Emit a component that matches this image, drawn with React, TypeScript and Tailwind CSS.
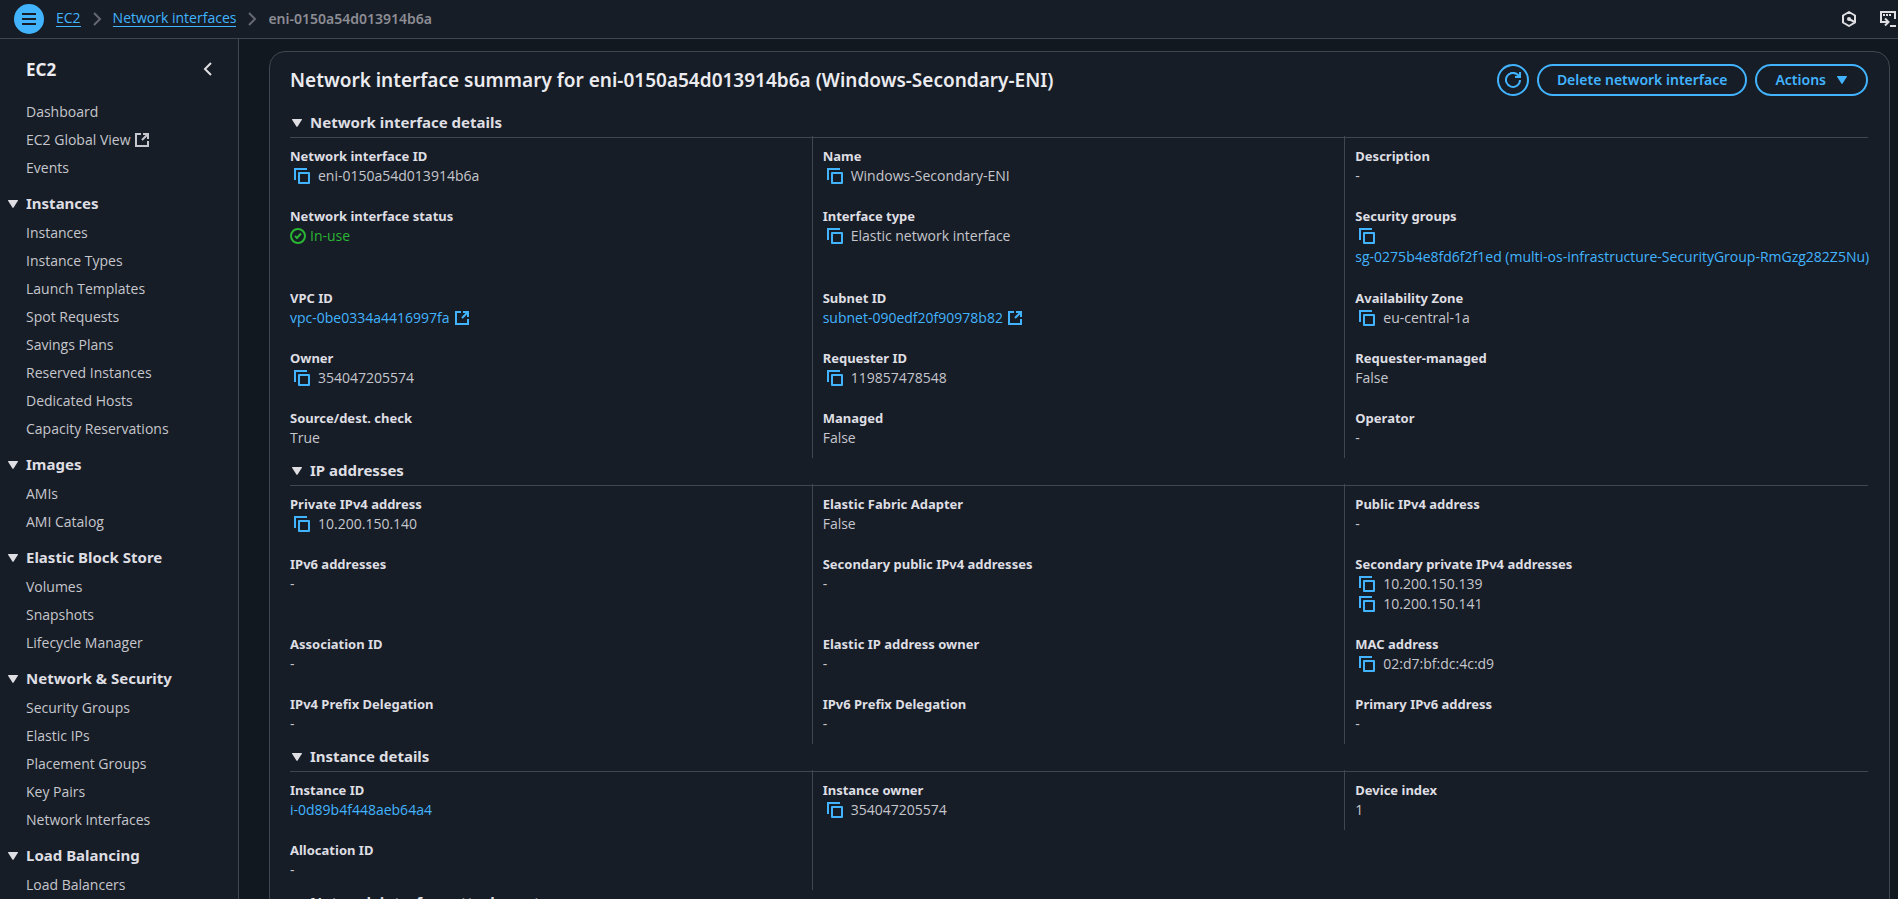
import type { ReactNode } from "react";

type Value =
  | { kind: "text"; text: string }
  | { kind: "copy"; text: string }
  | { kind: "link"; text: string; external?: boolean }
  | { kind: "status"; text: string }
  | { kind: "copyLink"; text: string };

type Field = { label: string; values: Value[] };

const text = (t: string): Value => ({ kind: "text", text: t });
const copy = (t: string): Value => ({ kind: "copy", text: t });
const field = (label: string, ...values: Value[]): Field => ({ label, values });

const navTop = [
  { label: "Dashboard" },
  { label: "EC2 Global View", external: true },
  { label: "Events" },
];

const navGroups = [
  {
    title: "Instances",
    items: [
      "Instances",
      "Instance Types",
      "Launch Templates",
      "Spot Requests",
      "Savings Plans",
      "Reserved Instances",
      "Dedicated Hosts",
      "Capacity Reservations",
    ],
  },
  { title: "Images", items: ["AMIs", "AMI Catalog"] },
  { title: "Elastic Block Store", items: ["Volumes", "Snapshots", "Lifecycle Manager"] },
  {
    title: "Network & Security",
    items: ["Security Groups", "Elastic IPs", "Placement Groups", "Key Pairs", "Network Interfaces"],
  },
  { title: "Load Balancing", items: ["Load Balancers"] },
];

const sections: { title: string; fields: Field[] }[] = [
  {
    title: "Network interface details",
    fields: [
      field("Network interface ID", copy("eni-0150a54d013914b6a")),
      field("Name", copy("Windows-Secondary-ENI")),
      field("Description", text("-")),
      field("Network interface status", { kind: "status", text: "In-use" }),
      field("Interface type", copy("Elastic network interface")),
      field("Security groups", {
        kind: "copyLink",
        text: "sg-0275b4e8fd6f2f1ed (multi-os-infrastructure-SecurityGroup-RmGzg282Z5Nu)",
      }),
      field("VPC ID", { kind: "link", text: "vpc-0be0334a4416997fa", external: true }),
      field("Subnet ID", { kind: "link", text: "subnet-090edf20f90978b82", external: true }),
      field("Availability Zone", copy("eu-central-1a")),
      field("Owner", copy("354047205574")),
      field("Requester ID", copy("119857478548")),
      field("Requester-managed", text("False")),
      field("Source/dest. check", text("True")),
      field("Managed", text("False")),
      field("Operator", text("-")),
    ],
  },
  {
    title: "IP addresses",
    fields: [
      field("Private IPv4 address", copy("10.200.150.140")),
      field("Elastic Fabric Adapter", text("False")),
      field("Public IPv4 address", text("-")),
      field("IPv6 addresses", text("-")),
      field("Secondary public IPv4 addresses", text("-")),
      field("Secondary private IPv4 addresses", copy("10.200.150.139"), copy("10.200.150.141")),
      field("Association ID", text("-")),
      field("Elastic IP address owner", text("-")),
      field("MAC address", copy("02:d7:bf:dc:4c:d9")),
      field("IPv4 Prefix Delegation", text("-")),
      field("IPv6 Prefix Delegation", text("-")),
      field("Primary IPv6 address", text("-")),
    ],
  },
  {
    title: "Instance details",
    fields: [
      field("Instance ID", { kind: "link", text: "i-0d89b4f448aeb64a4" }),
      field("Instance owner", copy("354047205574")),
      field("Device index", text("1")),
      field("Allocation ID", text("-")),
    ],
  },
  { title: "Network interface attachment", fields: [] },
];

function CaretDown() {
  return (
    <svg viewBox="0 0 12 12" className="size-3 shrink-0" fill="currentColor" aria-hidden="true">
      <path d="M1.5 2h9q.9 0 .4.8L6.6 9.6q-.6.8-1.2 0L1.1 2.8Q.6 2 1.5 2z" />
    </svg>
  );
}

function ExternalIcon() {
  return (
    <svg viewBox="0 0 16 16" className="size-4 shrink-0" fill="none" stroke="currentColor" strokeWidth="2" aria-hidden="true">
      <path d="M7 2H2v12h12V9" />
      <path d="M9 2h5v5M14 2 8 8" />
    </svg>
  );
}

function CopyIcon() {
  return (
    <svg viewBox="0 0 16 16" className="size-4 shrink-0" fill="none" stroke="currentColor" strokeWidth="2" aria-hidden="true">
      <path d="M1 12V1h12" />
      <path d="M5 5h10v10H5z" strokeLinejoin="round" />
    </svg>
  );
}

function CopyButton({ label }: { label: string }) {
  return (
    <button type="button" aria-label={`Copy ${label}`} className="mx-1 flex items-center text-[#42b4ff]">
      <CopyIcon />
    </button>
  );
}

function ChevronRight() {
  return (
    <svg viewBox="0 0 16 16" className="size-4 shrink-0 text-[#656871]" fill="none" stroke="currentColor" strokeWidth="2" aria-hidden="true">
      <path d="m5 2 6 6-6 6" />
    </svg>
  );
}

function FieldValue({ value, label }: { value: Value; label: string }) {
  switch (value.kind) {
    case "copy":
      return (
        <div className="flex h-5 items-center gap-1">
          <CopyButton label={label} />
          <span>{value.text}</span>
        </div>
      );
    case "status":
      return (
        <div className="flex h-5 items-center gap-1 text-[#2bb534]">
          <svg viewBox="0 0 16 16" className="size-4 shrink-0" fill="none" stroke="currentColor" strokeWidth="2" aria-hidden="true">
            <circle cx="8" cy="8" r="7" />
            <path d="m5 8 2 2 4-4.5" />
          </svg>
          <span>{value.text}</span>
        </div>
      );
    case "link":
      return (
        <a href="#" className="flex h-5 items-center gap-1 text-[#42b4ff]">
          {value.text}
          {value.external && <ExternalIcon />}
        </a>
      );
    case "copyLink":
      return (
        <div>
          <div className="flex h-5 items-center">
            <CopyButton label={label} />
          </div>
          <a href="#" className="block leading-[22px] whitespace-nowrap text-[#42b4ff]">
            {value.text}
          </a>
        </div>
      );
    default:
      return <div className="h-5">{value.text}</div>;
  }
}

function Section({ title, fields }: { title: string; fields: Field[] }) {
  return (
    <section>
      <h3 className="border-b border-[#424650] pb-[2px] text-[#dedee3]">
        <button
          type="button"
          aria-expanded="true"
          className="flex h-[25px] items-center gap-[7px] pl-px font-['Noto_Sans',sans-serif] text-[15px] font-bold"
        >
          <CaretDown />
          {title}
        </button>
      </h3>
      <dl className="-mx-[10px] -mt-[2px] grid grid-cols-3">
        {fields.map((f) => (
          <div
            key={f.label}
            className="min-w-0 border-r border-[#424650] px-[10px] py-[10px] nth-[3n]:border-r-0"
          >
            <dt className="font-['Noto_Sans',sans-serif] text-[13px] leading-5 font-bold text-[#dedee3]">{f.label}</dt>
            {f.values.map((v) => (
              <dd key={v.text}>
                <FieldValue value={v} label={f.label} />
              </dd>
            ))}
          </div>
        ))}
      </dl>
    </section>
  );
}

function NavLink({ children }: { children: ReactNode }) {
  return (
    <li>
      <a href="#" className="flex h-7 items-center gap-1 pl-[26px]">
        {children}
      </a>
    </li>
  );
}

function TopBar() {
  return (
    <header className="flex h-[39px] shrink-0 items-center justify-between border-b border-[#424650] pr-[2px] pb-px pl-[14px]">
      <div className="flex items-center gap-3">
        <button
          type="button"
          aria-label="Open navigation"
          className="flex size-[30px] items-center justify-center rounded-full bg-[#42b4ff] text-[#161d26]"
        >
          <svg viewBox="0 0 16 16" className="size-4" stroke="currentColor" strokeWidth="2" aria-hidden="true">
            <path d="M1 3h14M1 8h14M1 13h14" />
          </svg>
        </button>
        <nav aria-label="Breadcrumbs">
          <ol className="flex items-center gap-2">
            <li className="flex items-center gap-2">
              <a href="#" className="border-b border-[#42b4ff] leading-4 text-[#42b4ff]">EC2</a>
              <ChevronRight />
            </li>
            <li className="flex items-center gap-2">
              <a href="#" className="border-b border-[#42b4ff] leading-4 text-[#42b4ff]">Network interfaces</a>
              <ChevronRight />
            </li>
            <li className="font-['Noto_Sans',sans-serif] font-semibold text-[#8c8c94]">eni-0150a54d013914b6a</li>
          </ol>
        </nav>
      </div>
      <div className="flex items-center gap-[23px] text-[#dedee3]">
        <button type="button" aria-label="Amazon Q">
          <svg viewBox="0 0 16 16" className="size-4" fill="none" stroke="currentColor" strokeWidth="2" strokeLinejoin="round" aria-hidden="true">
            <path d="m8 1 6 3.5v7L8 15l-6-3.5v-7z" />
            <circle cx="8" cy="8" r="2" fill="currentColor" stroke="none" />
            <path d="m8 8 5.5 3" />
          </svg>
        </button>
        <button type="button" aria-label="CloudShell">
          <svg viewBox="0 0 16 16" className="size-4" fill="none" stroke="currentColor" strokeWidth="2" aria-hidden="true">
            <path d="M15 8V1H1v10h7" />
            <path d="M5 7.5 8.500 11 5 14.500" />
            <path d="M10 15h6" />
            <path d="M3 4h2M6 4h2M9 4h2" />
          </svg>
        </button>
      </div>
    </header>
  );
}

function SideNav() {
  return (
    <aside className="w-[239px] shrink-0 overflow-y-auto border-r border-[#424650] [scrollbar-width:none]">
      <div className="flex h-[59px] items-center justify-between pr-[22px] pl-[26px]">
        <h2 className="pt-[3px] font-['Noto_Sans',sans-serif] text-[17px] font-bold text-[#ebebf0]">EC2</h2>
        <button type="button" aria-label="Close side navigation" className="text-[#dedee3]">
          <svg viewBox="0 0 16 16" className="size-4" fill="none" stroke="currentColor" strokeWidth="2" aria-hidden="true">
            <path d="M11 2 5 8l6 6" />
          </svg>
        </button>
      </div>
      <nav aria-label="EC2">
        <ul>
          {navTop.map((item) => (
            <NavLink key={item.label}>
              {item.label}
              {item.external && <ExternalIcon />}
            </NavLink>
          ))}
        </ul>
        {navGroups.map((group) => (
          <div key={group.title}>
            <h3 className="pt-[7px] text-[#dedee3]">
              <button
                type="button"
                aria-expanded="true"
                className="flex h-[30px] items-center gap-[7px] pl-[7px] font-['Noto_Sans',sans-serif] text-[15px] font-bold"
              >
                <CaretDown />
                {group.title}
              </button>
            </h3>
            <ul>
              {group.items.map((item) => (
                <NavLink key={item}>{item}</NavLink>
              ))}
            </ul>
          </div>
        ))}
      </nav>
    </aside>
  );
}

export default function App() {
  return (
    <div className="flex h-screen flex-col overflow-hidden bg-[#161d26] font-['Open_Sans','Noto_Sans',sans-serif] text-sm text-[#c6c6cd]">
      <TopBar />
      <div className="flex min-h-0 flex-1">
        <SideNav />
        <main className="min-w-0 flex-1 overflow-y-auto bg-[#11181f] pt-3 pr-2 pl-[30px] [scrollbar-width:none]">
          <article className="rounded-2xl border border-[#424650] bg-[#161d26] pr-[21px] pb-5 pl-5">
            <header className="mb-[2px] flex h-14 items-center justify-between">
              <h1 className="pt-[2px] font-['Noto_Sans',sans-serif] text-[19px] font-semibold text-[#ebebf0]">
                Network interface summary for eni-0150a54d013914b6a (Windows-Secondary-ENI)
              </h1>
              <div className="flex gap-2 font-['Noto_Sans',sans-serif] font-semibold text-[#42b4ff]">
                <button
                  type="button"
                  aria-label="Refresh"
                  className="flex size-8 items-center justify-center rounded-full border-2 border-[#42b4ff]"
                >
                  <svg viewBox="0 0 16 16" className="size-4" fill="none" stroke="currentColor" strokeWidth="2" aria-hidden="true">
                    <path d="M15 8a7 7 0 1 1-2-5l1.500 1.500" />
                    <path d="M15 0v5h-5" />
                  </svg>
                </button>
                <button type="button" className="h-8 rounded-full border-2 border-[#42b4ff] px-[18px]">
                  Delete network interface
                </button>
                <button
                  type="button"
                  className="flex h-8 items-center gap-[10px] rounded-full border-2 border-[#42b4ff] px-[18px]"
                >
                  Actions
                  <CaretDown />
                </button>
              </div>
            </header>
            {sections.map((s) => (
              <Section key={s.title} title={s.title} fields={s.fields} />
            ))}
          </article>
        </main>
      </div>
    </div>
  );
}
